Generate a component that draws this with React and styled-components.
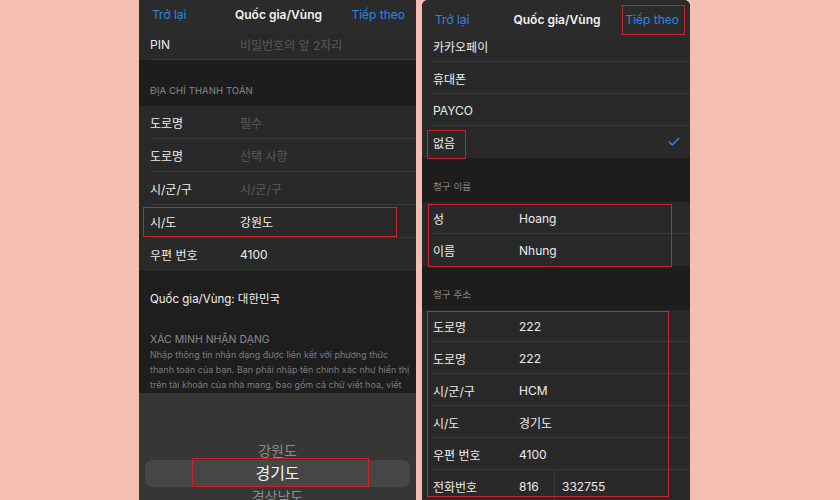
import React from "react";
import styled, { createGlobalStyle } from "styled-components";
import { Check } from "lucide-react";

const BLUE = "#2d86e0";

const GlobalStyle = createGlobalStyle`
  body {
    margin: 0;
    background: #f5beb2;
    font-family: "Inter", "Noto Sans CJK KR", sans-serif;
  }
`;

const leftRows = [
  { label: "도로명", value: "필수", hint: true },
  { label: "도로명", value: "선택 사항", hint: true },
  { label: "시/군/구", value: "시/군/구", hint: true },
  { label: "시/도", value: "강원도", mark: true },
  { label: "우편 번호", value: "4100", last: true },
];

const paymentRows = ["휴대폰", "PAYCO"];

const addressRows = [
  { label: "도로명", value: "222" },
  { label: "도로명", value: "222" },
  { label: "시/군/구", value: "HCM" },
  { label: "시/도", value: "경기도" },
  { label: "우편 번호", value: "4100" },
];

const noteLines = [
  "Nhập thông tin nhận dạng được liên kết với phương thức",
  "thanh toán của bạn. Bạn phải nhập tên chính xác như hiển thị",
  "trên tài khoản của nhà mang, bao gồm cả chữ viết hoa, viết",
];

function NavBar({ height, marked }) {
  return (
    <Nav $h={height}>
      <NavLink $side="start">Trở lại</NavLink>
      <NavTitle>Quốc gia/Vùng</NavTitle>
      <NavLink $side="end">
        Tiếp theo
        {marked && <Mark $l={-3} $t={-7} $w={63} $h={30} />}
      </NavLink>
    </Nav>
  );
}

function App() {
  return (
    <>
      <GlobalStyle />
      <Page>
        <Phone $w={277}>
          <NavBar height={34} />
          <Cell>
            <Row $h={26} $lw={90} $pb={6}>
              <Label>PIN</Label>
              <Value $hint>비밀번호의 앞 2자리</Value>
            </Row>
          </Cell>
          <SectionHeader $h={46} $pb={10}>Địa chỉ thanh toán</SectionHeader>
          <Cell>
            {leftRows.map((row, i) => (
              <Row key={i} $h={33} $lw={90} $last={row.last}>
                <Label>{row.label}</Label>
                <Value $hint={row.hint}>{row.value}</Value>
                {row.mark && <Mark $l={4} $t={2} $w={254} $h={30} />}
              </Row>
            ))}
          </Cell>
          <CountryBlock>
            <CountryText>Quốc gia/Vùng: 대한민국</CountryText>
            <NoteTitle>Xác minh nhận dạng</NoteTitle>
            <Note>
              {noteLines.map((line) => (
                <NoteLine key={line}>{line}</NoteLine>
              ))}
              <NoteLine>
                thường và ký tự có dấu. <NoteLink>Tìm hiểu thêm</NoteLink>
              </NoteLine>
            </Note>
          </CountryBlock>
          <Picker>
            <PickerItem>강원도</PickerItem>
            <PickerSelected>
              경기도
              <Mark $l={47} $t={-2} $w={177} $h={29} />
            </PickerSelected>
            <PickerItem>경상남도</PickerItem>
          </Picker>
        </Phone>

        <Phone $w={268} $round>
          <NavBar height={38} marked />
          <Cell>
            <Row $h={24} $lw={86} $pb={8}>
              <Label>카카오페이</Label>
            </Row>
            {paymentRows.map((name) => (
              <Row key={name} $h={32} $lw={86}>
                <Label>{name}</Label>
              </Row>
            ))}
            <Row $h={32} $lw={86} $last>
              <Label>없음</Label>
              <Tick>
                <Check size={14} strokeWidth={2.6} color={BLUE} />
              </Tick>
              <Mark $l={5} $t={4} $w={39} $h={29} />
            </Row>
          </Cell>
          <SectionHeader $h={44} $pb={9}>청구 이름</SectionHeader>
          <Cell>
            <Row $h={32} $lw={86}>
              <Label>성</Label>
              <Value>Hoang</Value>
            </Row>
            <Row $h={32} $lw={86} $last>
              <Label>이름</Label>
              <Value>Nhung</Value>
            </Row>
            <Mark $l={6} $t={2} $w={244} $h={63} />
          </Cell>
          <SectionHeader $h={44} $pb={9}>청구 주소</SectionHeader>
          <Cell>
            {addressRows.map((row, i) => (
              <Row key={i} $h={32} $lw={86}>
                <Label>{row.label}</Label>
                <Value>{row.value}</Value>
              </Row>
            ))}
            <Row $h={32} $lw={86} $last>
              <Label>전화번호</Label>
              <PhoneValue>
                <AreaCode>816</AreaCode>
                <Value>332755</Value>
              </PhoneValue>
            </Row>
            <Mark $l={5} $t={1} $w={242} $h={186} />
          </Cell>
        </Phone>
      </Page>
    </>
  );
}

export default App;

const Page = styled.div`
  display: flex;
  gap: 6px;
  height: 500px;
  padding-left: 139px;
  overflow: hidden;
  background: #f5beb2;
`;

const Phone = styled.div`
  display: flex;
  flex-direction: column;
  flex-shrink: 0;
  width: ${(p) => p.$w}px;
  height: 500px;
  overflow: hidden;
  background: #1d1d1d;
  border-radius: ${(p) => (p.$round ? "6px 6px 0 0" : "0")};
  color: #ececec;
  font-size: 12px;
`;

const Nav = styled.div`
  position: relative;
  z-index: 3;
  display: grid;
  grid-template-columns: 1fr auto 1fr;
  align-items: center;
  flex-shrink: 0;
  height: ${(p) => p.$h}px;
  padding: 0 11px ${(p) => (p.$h > 35 ? 0 : 6)}px 13px;
  box-sizing: border-box;
  background: #2b2b2b;
  font-size: 12px;
`;

const NavLink = styled.span`
  position: relative;
  justify-self: ${(p) => p.$side};
  color: ${BLUE};
`;

const NavTitle = styled.span`
  font-weight: 600;
  color: #f2f2f2;
`;

const Cell = styled.div`
  position: relative;
  flex-shrink: 0;
  background: #292929;
`;

const Row = styled.div`
  position: relative;
  display: grid;
  grid-template-columns: ${(p) => p.$lw}px 1fr auto;
  align-items: center;
  height: ${(p) => p.$h}px;
  padding: 0 0 ${(p) => p.$pb || 0}px 11px;
  box-sizing: border-box;

  &::before {
    content: "";
    display: ${(p) => (p.$last ? "none" : "block")};
    position: absolute;
    left: 11px;
    right: 0;
    bottom: 0;
    border-bottom: 1px solid #3a3a3a;
  }
`;

const Label = styled.span`
  color: #ececec;
  white-space: nowrap;
`;

const Value = styled.span`
  color: ${(p) => (p.$hint ? "#595959" : "#ececec")};
  white-space: nowrap;
`;

const PhoneValue = styled.div`
  display: flex;
  align-items: center;
  height: 100%;
`;

const AreaCode = styled.span`
  display: flex;
  align-items: center;
  width: 35px;
  height: 100%;
  margin-right: 7px;
  border-right: 1px solid #3a3a3a;
`;

const Tick = styled.span`
  grid-column: 3;
  display: flex;
  padding-right: 9px;
`;

const SectionHeader = styled.div`
  display: flex;
  align-items: flex-end;
  flex-shrink: 0;
  height: ${(p) => p.$h}px;
  padding: 0 11px ${(p) => p.$pb}px;
  box-sizing: border-box;
  color: #8a8a8a;
  font-size: 9.5px;
  text-transform: uppercase;
  letter-spacing: 0.1px;
`;

const CountryBlock = styled.div`
  flex-shrink: 0;
  height: 122px;
  padding: 20px 11px 0;
  box-sizing: border-box;
  overflow: hidden;
  background: #1e1e1e;
`;

const CountryText = styled.div`
  line-height: 16px;
  color: #f0f0f0;
  font-size: 11.5px;
`;

const NoteTitle = styled.div`
  margin-top: 26px;
  line-height: 14px;
  color: #8a8a8a;
  font-size: 10.5px;
  text-transform: uppercase;
`;

const Note = styled.div`
  color: #7c7c7c;
  font-size: 9px;
  line-height: 15px;
`;

const NoteLine = styled.div`
  white-space: nowrap;
`;

const NoteLink = styled.span`
  color: ${BLUE};
`;

const Picker = styled.div`
  display: flex;
  flex-direction: column;
  align-items: center;
  flex: 1;
  padding: 48px 6px 0;
  background: #363636;
  overflow: hidden;
`;

const PickerItem = styled.div`
  height: 19px;
  line-height: 19px;
  color: #8c8c8c;
  font-size: 14px;
`;

const PickerSelected = styled.div`
  position: relative;
  align-self: stretch;
  height: 27px;
  line-height: 27px;
  border-radius: 7px;
  background: #464646;
  color: #f4f4f4;
  font-size: 16px;
  text-align: center;
`;

const Mark = styled.span`
  position: absolute;
  z-index: 2;
  left: ${(p) => p.$l}px;
  top: ${(p) => p.$t}px;
  width: ${(p) => p.$w}px;
  height: ${(p) => p.$h}px;
  box-sizing: border-box;
  border: 1px solid #c8242b;
  pointer-events: none;
`;
